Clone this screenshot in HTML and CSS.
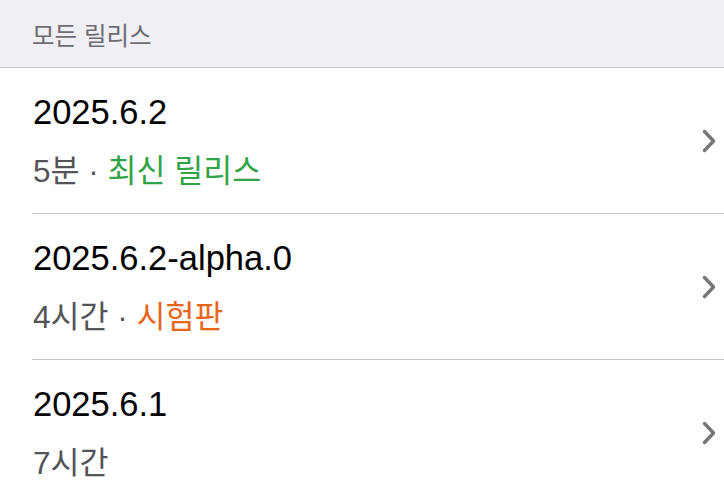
FILE: index.html
```html
<!DOCTYPE html>
<html lang="ko">
<head>
    <meta charset="UTF-8">
    <meta name="viewport" content="width=device-width, initial-scale=1.0">
    <title>모든 릴리스</title>
    <link rel="stylesheet" href="styles.css">
</head>
<body>
    <div class="section-header">모든 릴리스</div>

    <div class="release-list">
        <a class="release" href="#">
            <div class="release-info">
                <div class="release-version">2025.6.2</div>
                <div class="release-meta">5분 · <span class="tag-latest">최신 릴리스</span></div>
            </div>
            <svg class="chevron" width="14" height="24" viewBox="0 0 14 24">
                <path d="M2.5 2.5 L11.5 12 L2.5 21.5" />
            </svg>
        </a>
        <a class="release" href="#">
            <div class="release-info">
                <div class="release-version">2025.6.2-alpha.0</div>
                <div class="release-meta">4시간 · <span class="tag-beta">시험판</span></div>
            </div>
            <svg class="chevron" width="14" height="24" viewBox="0 0 14 24">
                <path d="M2.5 2.5 L11.5 12 L2.5 21.5" />
            </svg>
        </a>
        <a class="release" href="#">
            <div class="release-info">
                <div class="release-version">2025.6.1</div>
                <div class="release-meta">7시간</div>
            </div>
            <svg class="chevron" width="14" height="24" viewBox="0 0 14 24">
                <path d="M2.5 2.5 L11.5 12 L2.5 21.5" />
            </svg>
        </a>
    </div>
</body>
</html>
```

FILE: styles.css
```css
body {
    font-family: "Liberation Sans", "Noto Sans CJK KR", sans-serif;
    background-color: #fff;
    margin: 0;
    padding: 0;
}
.section-header {
    background-color: #efeff4;
    color: #6d6d72;
    font-size: 24.5px;
    line-height: 34px;
    padding: 20px 32px 13px;
    border-bottom: 1px solid #c6c6c8;
}
.release-list {
    padding-left: 32px;
}
.release {
    display: flex;
    align-items: center;
    padding: 24px 8px 24px 1px;
    border-bottom: 1px solid #c6c6c8;
    color: inherit;
    text-decoration: none;
}
.release-info {
    flex: 1;
}
.release-version {
    color: #000;
    font-size: 34.5px;
    line-height: 40px;
}
.release-meta {
    color: #545458;
    font-size: 31.5px;
    line-height: 36px;
    margin-top: 21px;
}
.tag-latest {
    color: #2fa345;
}
.tag-beta {
    color: #e8661c;
}
.chevron path {
    fill: none;
    stroke: #77777b;
    stroke-width: 3.5;
    stroke-linecap: round;
    stroke-linejoin: round;
}
```
